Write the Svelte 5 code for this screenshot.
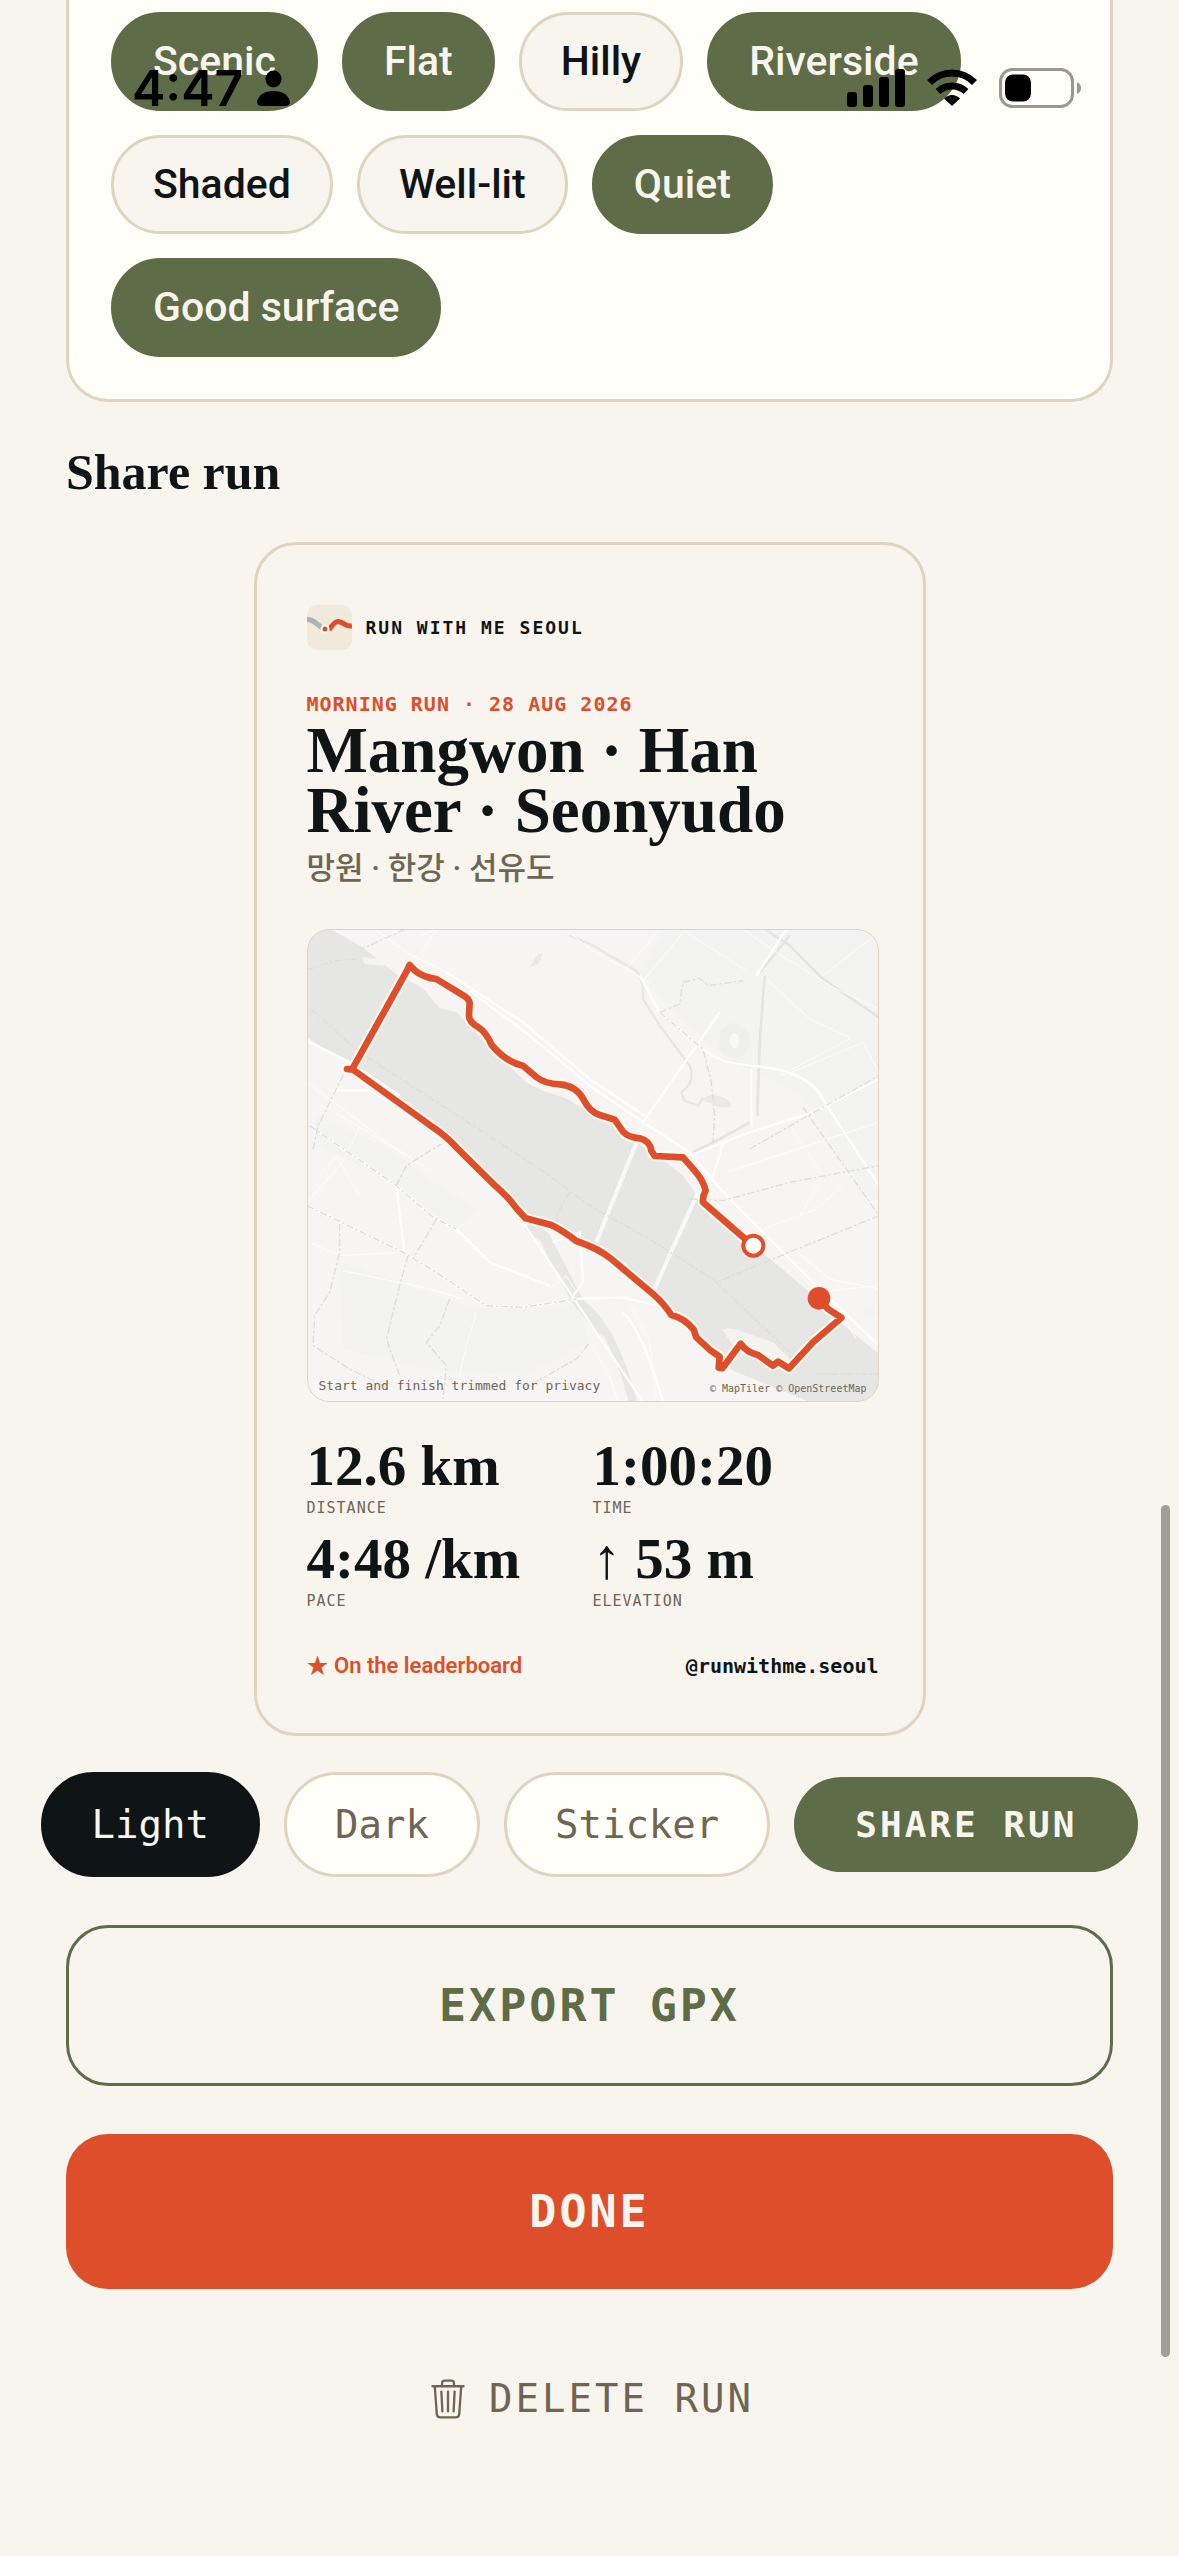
<script lang="ts">
  interface Tag {
    label: string;
    on: boolean;
  }

  interface Stat {
    value: string;
    label: string;
  }

  let tags = $state<Tag[]>([
    { label: "Scenic", on: true },
    { label: "Flat", on: true },
    { label: "Hilly", on: false },
    { label: "Riverside", on: true },
    { label: "Shaded", on: false },
    { label: "Well-lit", on: false },
    { label: "Quiet", on: true },
    { label: "Good surface", on: true },
  ]);

  const styles = ["Light", "Dark", "Sticker"];
  let style = $state("Light");

  const stats: Stat[] = [
    { value: "12.6 km", label: "Distance" },
    { value: "1:00:20", label: "Time" },
    { value: "4:48 /km", label: "Pace" },
    { value: "↑ 53 m", label: "Elevation" },
  ];

  const route =
    "M1391 1010L1355 980L1240 880Q1238 862 1248 845Q1240 812 1215 785L1180 745L1095 741L1085 725Q1080 695 1050 688Q1015 685 1000 668L975 632L930 618Q900 608 882 572Q860 530 810 526Q765 524 740 504L700 470Q650 460 606 408Q590 370 565 354Q536 338 538 316L540 282Q538 268 522 260L440 210Q400 205 375 184L360 168L352 185L188 480L172 480L190 482L430 655Q470 682 500 715L610 824Q640 850 660 872Q680 900 708 928L785 948Q820 965 860 996Q930 1020 965 1050L1090 1155Q1120 1180 1145 1218Q1185 1228 1212 1262L1220 1285L1260 1322L1290 1343L1287 1376L1298 1378L1353 1304Q1370 1330 1405 1338L1450 1370L1465 1358L1498 1378L1570 1300L1655 1226L1615 1200L1588 1168";

  const river =
    "M52 60L125 62L215 112L275 160L320 195L400 238L450 298L500 310L535 345L610 425L650 465L710 520L760 545L830 568L900 612L960 640L1030 690L1100 735L1180 800L1230 870L1300 930L1430 1040L1560 1150L1650 1240L1768 1335L1768 1479L1560 1479L1330 1385L1290 1340L1220 1275L1150 1215L1090 1140L960 1035L910 998L800 955L700 930L470 685L220 500L180 455L110 425L52 385Z";

  // minor streets, drawn as hairlines
  const streets = [
    "M52 520L300 705L430 790",
    "M52 880L160 760L210 650",
    "M120 600L350 740",
    "M90 800L140 740L210 860",
    "M60 1000L150 1040L330 1030",
    "M160 1085L420 1140L520 1170",
    "M560 1210L530 1310L500 1440",
    "M390 80L440 62L395 130",
    "M255 60L350 130L470 190",
    "M825 60L900 120L1010 180",
    "M1110 60L1010 180L1080 220",
    "M1190 60L1060 215",
    "M1190 70L1370 185",
    "M1360 60L1460 130L1640 240L1768 300",
    "M1768 70L1600 200",
    "M1430 210L1560 330L1680 385",
    "M1680 390L1470 500",
    "M1480 500L1720 400L1768 490",
    "M1310 790L1768 640",
    "M1500 650L1600 800L1520 940",
    "M1420 960L1580 900L1660 830",
    "M1500 1010L1620 1110L1768 1140",
    "M1570 1150L1768 1130",
    "M1620 1160L1700 1290",
    "M1020 1180L1080 1300L1100 1470",
    "M900 1300L960 1400L985 1479",
    "M780 1140L830 1100L860 1150",
  ];

  const roads = [
    "M52 395L180 460L330 560",
    "M52 890L340 1030L440 1090L590 1190L700 1195L860 1170",
    "M60 650L320 830L430 925L500 960L600 1060L780 1130",
    "M320 830L345 1035",
    "M130 545L240 545L320 590",
    "M700 940L850 1165L960 1330L1060 1479",
    "M850 1170L1000 1165L1100 1190",
    "M790 1000L870 970L880 1120L850 1160",
    "M540 245L720 380L900 530L1060 640L1200 730L1310 860L1430 980L1560 1110L1768 1310",
    "M470 190L700 340L900 510L1080 630",
    "M1060 640L1200 440L1290 310",
    "M1100 300L1240 420Q1290 465 1390 470L1460 480Q1540 500 1580 540L1670 680L1768 830",
    "M1200 740L1380 670L1570 610L1768 510",
    "M1050 200L1110 310",
    "M1400 200L1490 60",
    "M1385 480L1385 650",
    "M1250 860L1290 740L1300 700",
    "M1000 1210Q1060 1270 1120 1479",
  ];

  const bridges = ["M1065 640L920 1000", "M1225 850L1090 1150"];

  const borders = [
    "M52 182L140 155L200 150",
    "M65 300L210 430L520 630L780 800L900 890L1070 985L1270 1110L1500 1330",
    "M345 62L215 120",
    "M70 720L85 650L130 560L170 480",
    "M150 945L150 1030L120 1150L75 1220L70 1310L180 1380L300 1440",
    "M355 1040L330 1130L290 1290L330 1400",
    "M440 930L370 1050",
    "M480 1170L450 1250L410 1300L470 1370L460 1470",
    "M320 830L350 770L455 705",
    "M1110 310L1170 285L1180 220L1230 208L1255 230L1360 215",
    "M1110 310L1240 420L1265 520L1275 620L1270 700",
    "M1200 870L1300 875L1500 820L1768 770",
    "M1768 920L1450 1050L1280 1120",
    "M1540 595L1768 920",
    "M1380 720L1520 640L1768 500",
    "M700 1440L860 1350L900 1300",
    "M840 850L800 920L805 960",
    "M1580 1395L1768 1395",
    "M52 890L340 1030L440 1090L590 1190L700 1195L860 1170",
    "M60 650L320 830L430 925L500 960",
  ];
</script>

<div class="screen">
  <header class="status">
    <div class="status-side">
      <span class="clock">4:47</span>
      <svg width="33" height="36" viewBox="0 0 33 36" aria-hidden="true">
        <ellipse cx="16.500" cy="9" rx="8" ry="8.500" />
        <path d="M5 36Q0 36 0 31.500Q3 21 16.500 21Q30 21 33 31.500Q33 36 28 36Z" />
      </svg>
    </div>
    <div class="status-side">
      <svg width="58" height="38" viewBox="0 0 58 38" aria-hidden="true">
        <rect x="0" y="23" width="10" height="15" rx="3" />
        <rect x="16" y="16" width="10" height="22" rx="3" />
        <rect x="32" y="8" width="10" height="30" rx="3" />
        <rect x="48" y="0" width="10" height="38" rx="3" />
      </svg>
      <svg class="wifi" width="50" height="38" viewBox="0 0 50 38" aria-hidden="true">
        <path class="arc" d="M2.500 13.500Q12 4 25 4Q38 4 47.500 13.500" />
        <path class="arc" d="M11 22.500Q17 17 25 17Q33 17 39 22.500" />
        <path d="M25 37L17 29.500Q20.500 26 25 26Q29.500 26 33 29.500Z" />
      </svg>
      <svg width="82" height="40" viewBox="0 0 82 40" aria-hidden="true">
        <rect class="cell" x="1.500" y="1.500" width="72" height="37" rx="12" />
        <rect x="6" y="6.500" width="26" height="27" rx="8" />
        <path class="nub" d="M78 14Q82 16 82 20Q82 24 78 26Z" />
      </svg>
    </div>
  </header>

  <main>
    <section class="panel" aria-label="Tags">
      {#each tags as tag (tag.label)}
        <button class="chip" class:on={tag.on} aria-pressed={tag.on} onclick={() => (tag.on = !tag.on)}>
          {tag.label}
        </button>
      {/each}
    </section>

    <h2>Share run</h2>

    <article class="card">
      <div class="brand">
        <svg class="logo" width="45" height="45" viewBox="0 0 45 45" aria-hidden="true">
          <rect width="45" height="45" rx="10" fill="#f1e9da" />
          <path d="M0 14.500Q5 14.500 9 18L15 23" fill="none" stroke="#abb5b8" stroke-width="5" />
          <path d="M22 25Q27 17 31 16.500Q34 16.500 38 19.500Q42 21.500 45 21" fill="none" stroke="#de4e2b" stroke-width="5" />
          <circle cx="18" cy="24" r="3.500" fill="#de4e2b" stroke="#fff" stroke-width="2" />
        </svg>
        <span>RUN WITH ME SEOUL</span>
      </div>

      <p class="eyebrow">MORNING RUN · 28 AUG 2026</p>
      <h3>Mangwon · Han River · Seonyudo</h3>
      <p class="local" lang="ko">망원 · 한강 · 선유도</p>

      <figure class="map">
        <svg viewBox="52 60 1716 1419" role="img" aria-label="Route map">
          <rect x="52" y="60" width="1716" height="1419" fill="#f6f5f3" />
          <path class="block" d="M1130 60L1768 60L1768 900L1660 760L1540 560L1300 440L1120 280L1050 190Z" />
          <path class="block" d="M80 620L300 720L430 820L560 900L500 960L320 830L80 700Z" />
          <path class="block" d="M150 1060L560 1200L860 1190L900 1300L700 1400L420 1380L160 1320Z" />
          <path class="river" d={river} />
          <path class="sand" d="M215 145L270 150L285 170L225 165Z" />
          <path class="sand" d="M1298 1262Q1320 1252 1370 1272L1450 1300L1500 1350L1480 1372L1400 1340L1330 1310Z" />
          <path class="stream" d="M715 945L765 985L860 1170L940 1270" stroke-width="34" />
          <path class="stream" d="M890 1195Q980 1280 1030 1479" stroke-width="24" />
          <path class="stream" d="M840 80L900 105L1040 185Q1065 220 1060 270L1110 350L1200 470Q1220 520 1175 550L1185 575L1225 590L1240 565" stroke-width="7" />
          <path class="water" d="M1235 572Q1260 550 1290 562Q1325 570 1325 594Q1290 600 1270 585Q1250 580 1235 572Z" />
          <path class="water" d="M720 175L745 135L762 132L745 165Z" />
          <path class="track" d="M1425 60L1500 110L1600 210L1768 325" />
          <path class="track" d="M1425 200L1410 400L1403 620" />
          <path class="track" d="M1210 730L1290 690L1380 640" />
          <path class="track" d="M1410 190L1500 80" />
          <ellipse cx="1334" cy="395" rx="46" ry="52" fill="#efefed" />
          <ellipse cx="1334" cy="395" rx="14" ry="24" fill="#f8f8f6" />
          <path class="block" d="M1725 1195L1758 1195L1758 1225L1725 1220Z" />
          {#each streets as d}
            <path class="street" {d} />
          {/each}
          {#each roads as d}
            <path class="road" {d} />
          {/each}
          {#each bridges as d}
            <path class="bridge" {d} />
          {/each}
          {#each borders as d}
            <path class="border" {d} />
          {/each}
          <path class="halo" d={route} />
          <path class="route" d={route} />
          <circle cx="1391" cy="1010" r="30" fill="#fffdf6" stroke="#de4e2b" stroke-width="12" />
          <circle cx="1588" cy="1168" r="34" fill="#de4e2b" />
        </svg>
        <figcaption>
          <span>Start and finish trimmed for privacy</span>
          <small>© MapTiler © OpenStreetMap</small>
        </figcaption>
      </figure>

      <dl class="stats">
        {#each stats as stat (stat.label)}
          <div>
            <dd>{stat.value}</dd>
            <dt>{stat.label}</dt>
          </div>
        {/each}
      </dl>

      <footer>
        <span class="rank">★ On the leaderboard</span>
        <span class="handle">@runwithme.seoul</span>
      </footer>
    </article>

    <div class="share-row">
      {#each styles as name (name)}
        <button class="pill" class:selected={style === name} aria-pressed={style === name} onclick={() => (style = name)}>
          {name}
        </button>
      {/each}
      <button class="share">SHARE RUN</button>
    </div>

    <button class="wide outline">EXPORT GPX</button>
    <button class="wide done">DONE</button>
    <button class="delete">
      <svg width="34" height="40" viewBox="0 0 102 121" aria-hidden="true">
        <path d="M4 22H98M33 22V13Q33 5 41 5H61Q69 5 69 13V22M11 22L17 106Q18 116 28 116H74Q84 116 85 106L91 22M31 38L34 98M51 38V98M71 38L68 98" />
      </svg>
      DELETE RUN
    </button>
  </main>

  <div class="scroll-thumb"></div>
</div>

<style>
  :global(body) {
    background: #f8f5ee;
  }

  .screen {
    --ink: #0f1417;
    --paper: #f8f5ee;
    --surface: #fffef8;
    --line: #ddd5c2;
    --moss: #5e6c47;
    --muted: #6e6652;
    --accent: #de4e2b;
    --sans: Roboto, "Noto Sans CJK KR", sans-serif;
    --serif: "Liberation Serif", serif;
    --mono: "DejaVu Sans Mono", monospace;

    position: relative;
    overflow: hidden;
    background: var(--paper);
    color: var(--ink);
    font-family: var(--sans);
  }

  h2, h3, p, figure, dl, dd {
    margin: 0;
  }

  button {
    margin: 0;
    border: 0;
    color: inherit;
    white-space: nowrap;
    cursor: pointer;
  }

  svg {
    display: block;
    flex: none;
  }

  /* status bar floats over the scrolled page */
  .status {
    position: absolute;
    z-index: 1;
    top: 64px;
    left: 0;
    right: 0;
    height: 48px;
    padding: 0 98px 0 132px;
    box-sizing: border-box;
    display: flex;
    align-items: center;
    justify-content: space-between;
    color: #000;
  }

  .status-side {
    display: flex;
    align-items: center;
    gap: 22px;
  }

  .status-side:first-child {
    gap: 14px;
  }

  .clock {
    font: 600 50px/48px Inter, sans-serif;
  }

  .arc {
    fill: none;
    stroke: #000;
    stroke-width: 7;
  }

  .cell {
    fill: none;
    stroke: #999892;
    stroke-width: 3;
  }

  .nub {
    fill: #999892;
  }

  main {
    display: flex;
    flex-direction: column;
    padding: 0 66px 96px;
  }

  .panel {
    display: flex;
    flex-wrap: wrap;
    gap: 24px;
    padding: 12px 42px 42px;
    border: 3px solid var(--line);
    border-top: 0;
    border-radius: 0 0 42px 42px;
    background: var(--surface);
  }

  .chip {
    padding: 24px 39px;
    border: 3px solid var(--line);
    border-radius: 50px;
    background: var(--paper);
    font: 500 41px/45px var(--sans);
  }

  .chip.on {
    border-color: var(--moss);
    background: var(--moss);
    color: var(--paper);
  }

  h2 {
    margin: 40px 0;
    font: 700 50px/60px var(--serif);
  }

  .card {
    align-self: center;
    width: 672px;
    max-width: 100%;
    box-sizing: border-box;
    padding: 60px 44px 54px 50px;
    border: 3px solid var(--line);
    border-radius: 42px;
  }

  .brand {
    display: flex;
    align-items: center;
    gap: 14px;
    margin-bottom: 41px;
    font: 700 18px/24px var(--mono);
    letter-spacing: 2px;
  }

  .eyebrow {
    font: 700 20px/26px var(--mono);
    letter-spacing: 1px;
    color: var(--accent);
  }

  h3 {
    max-width: 520px;
    margin-top: 3px;
    font: 700 65px/60px var(--serif);
  }

  .local {
    margin: 9px 0 40px;
    font: 500 31px/40px var(--sans);
    color: var(--muted);
  }

  .map {
    position: relative;
    border-radius: 22px;
    overflow: hidden;
  }

  .map::after {
    content: "";
    position: absolute;
    inset: 0;
    border: 1px solid var(--line);
    border-radius: 22px;
  }

  .map svg {
    width: 100%;
    height: auto;
  }

  .map path {
    fill: none;
    stroke-linejoin: round;
  }

  .map .river {
    fill: #e6e7e4;
  }

  .map .water {
    fill: #e9e9e7;
  }

  .map .block {
    fill: #f3f3f1;
  }

  .map .sand {
    fill: #f4f3ef;
  }

  .stream {
    stroke: #e7e8e6;
  }

  .track {
    stroke: #e4e4e2;
    stroke-width: 8;
  }

  .street {
    stroke: #fcfcfb;
    stroke-width: 3;
  }

  .road {
    stroke: #fdfdfc;
    stroke-width: 7;
  }

  .bridge {
    stroke: #f8f8f6;
    stroke-width: 12;
  }

  .border {
    stroke: #dededb;
    stroke-width: 4;
    stroke-dasharray: 22 7 8 7;
  }

  .halo {
    stroke: #fffaf0;
    stroke-width: 32;
    stroke-linecap: round;
  }

  .route {
    stroke: var(--accent);
    stroke-width: 20;
    stroke-linecap: round;
  }

  figcaption {
    position: absolute;
    left: 12px;
    right: 12px;
    bottom: 6px;
    display: flex;
    align-items: flex-end;
    justify-content: space-between;
    font: 13px/20px var(--mono);
    color: var(--muted);
  }

  figcaption small {
    font-size: 10px;
    line-height: 14px;
  }

  .stats {
    display: grid;
    grid-template-columns: 1fr 1fr;
    row-gap: 13px;
    margin: 36px 0 42px;
  }

  .stats div {
    display: flex;
    flex-direction: column;
    gap: 4px;
  }

  dd {
    font: 700 57px/56px var(--serif);
  }

  dt {
    font: 15px/20px var(--mono);
    letter-spacing: 1px;
    text-transform: uppercase;
    color: var(--muted);
  }

  footer {
    display: flex;
    align-items: center;
    justify-content: space-between;
    line-height: 26px;
  }

  .rank {
    font-size: 22px;
    font-weight: 600;
    color: var(--accent);
  }

  .handle {
    font-family: var(--mono);
    font-size: 20px;
    font-weight: 700;
  }

  .share-row {
    display: flex;
    align-items: center;
    justify-content: center;
    gap: 24px;
    margin: 36px -66px 48px;
  }

  .pill {
    padding: 24px 48px;
    border: 3px solid var(--line);
    border-radius: 53px;
    background: var(--surface);
    font: 39px/51px var(--mono);
    color: var(--muted);
  }

  .pill.selected {
    border-color: var(--ink);
    background: var(--ink);
    color: var(--paper);
  }

  .share {
    padding: 24px 61px;
    border-radius: 48px;
    background: var(--moss);
    font: 700 36px/47px var(--mono);
    letter-spacing: 3px;
    color: var(--paper);
  }

  .wide {
    margin-bottom: 48px;
    padding: 50px;
    border-radius: 42px;
    font: 700 45px/55px var(--mono);
    letter-spacing: 3px;
  }

  .outline {
    border: 3px solid var(--moss);
    background: transparent;
    color: var(--moss);
  }

  .done {
    background: var(--accent);
    color: var(--paper);
  }

  .delete {
    display: flex;
    align-items: center;
    justify-content: center;
    gap: 24px;
    padding: 36px 36px 36px 42px;
    background: transparent;
    font: 39px/52px var(--mono);
    letter-spacing: 3px;
    color: var(--muted);
  }

  .delete path {
    fill: none;
    stroke: var(--muted);
    stroke-width: 7;
    stroke-linecap: round;
    stroke-linejoin: round;
  }

  .scroll-thumb {
    position: absolute;
    top: 1505px;
    right: 9px;
    width: 9px;
    height: 852px;
    border-radius: 5px;
    background: #a19e99;
  }
</style>
